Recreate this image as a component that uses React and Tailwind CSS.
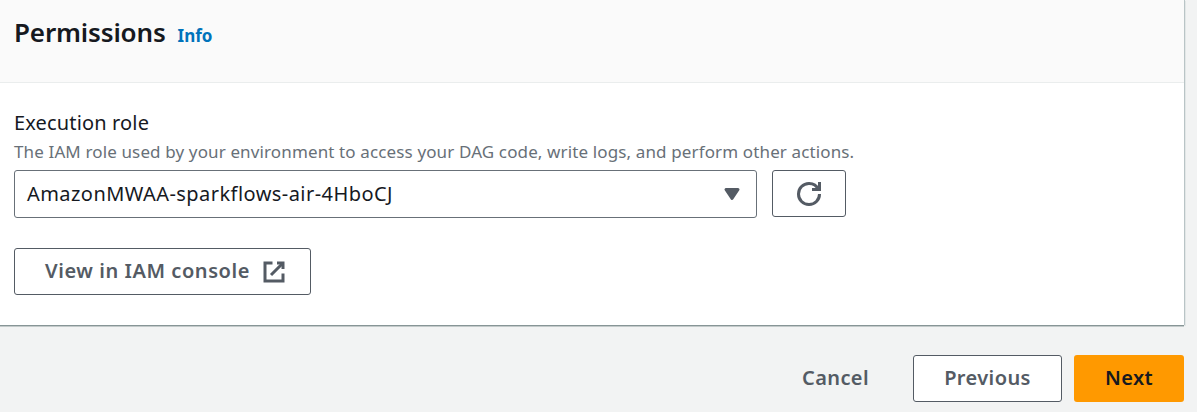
function RefreshIcon() {
  return (
    <svg viewBox="0 0 16 16" className="h-6 w-6 shrink-0 fill-none stroke-[#545b64] stroke-2">
      <path d="M10 5h5V0" />
      <path d="M15 8a6.957 6.957 0 0 1-7 7 6.957 6.957 0 0 1-7-7 6.957 6.957 0 0 1 7-7 6.87 6.87 0 0 1 6.3 4" />
    </svg>
  );
}

function CaretIcon() {
  return (
    <svg viewBox="0 0 16 16" className="h-6 w-6 shrink-0 fill-[#545b64] stroke-[#545b64] stroke-2">
      <path d="M4 5h8l-4 6z" strokeLinejoin="round" />
    </svg>
  );
}

function ExternalIcon() {
  return (
    <svg viewBox="0 0 16 16" className="h-6 w-6 shrink-0 fill-none stroke-[#545b64] stroke-2">
      <path d="M10 2h4v4" />
      <path d="M6 10l8-8" />
      <path d="M14 9.048V14H2V2h5" />
    </svg>
  );
}

export default function App() {
  return (
    <div className="h-[412px] w-[1197px] overflow-hidden bg-[#f2f3f3] font-['Noto_Sans',sans-serif] text-[#16191f]">
      <section className="h-[325px] w-[1184px] bg-white shadow-[0_1px_0_0_#879596,1px_0_0_0_#b9c4c6,0_2px_0_0_#c3caca,2px_1px_0_0_#e3e7e7]">
        <header className="flex h-[83px] items-start border-b border-[#eaeded] bg-[#fafafa] pt-[14px] pl-[14px]">
          <div className="flex items-baseline gap-[12px]">
            <h2 className="text-[26px] leading-9 font-semibold tracking-[-0.15px]">Permissions</h2>
            <a className="text-[17px] leading-6 font-bold text-[#0073bb]">Info</a>
          </div>
        </header>
        <div className="flex flex-col items-start pl-[14px]">
          <label className="mt-[25px] text-[20px] leading-[30px] tracking-[0.15px]">Execution role</label>
          <p className="mt-[2px] mb-[6px] text-[17px] leading-6 tracking-[0.13px] text-[#687078]">
            The IAM role used by your environment to access your DAG code, write logs, and perform other actions.
          </p>
          <div className="flex items-start gap-[15px]">
            <div className="flex h-12 w-[743px] items-center justify-between rounded-[3px] border border-[#687078] pr-3 pl-3 text-[20px] tracking-[0.44px]">
              <span>AmazonMWAA-sparkflows-air-4HboCJ</span>
              <CaretIcon />
            </div>
            <button className="flex h-[47px] w-[74px] items-center justify-center rounded-[3px] border border-[#545b64]">
              <RefreshIcon />
            </button>
          </div>
          <button className="mt-[30px] flex h-[47px] w-[297px] items-center justify-between rounded-[3px] border border-[#545b64] pr-6 pl-[30px] text-[20px] font-semibold tracking-[0.56px] text-[#545b64]">
            <span className="pb-[2px]">View in IAM console</span>
            <ExternalIcon />
          </button>
        </div>
      </section>
      <footer className="mt-[30px] flex w-[1184px] items-center justify-end text-[20px] font-semibold tracking-[0.4px] text-[#545b64]">
        <button className="mr-[44px] h-[47px] pb-[2px]">Cancel</button>
        <button className="mr-3 h-[47px] w-[149px] rounded-[3px] border border-[#545b64] bg-white pb-[2px]">Previous</button>
        <button className="h-[47px] w-[110px] rounded-[3px] bg-[#ff9900] pb-[2px] text-[#16191f]">Next</button>
      </footer>
    </div>
  );
}
